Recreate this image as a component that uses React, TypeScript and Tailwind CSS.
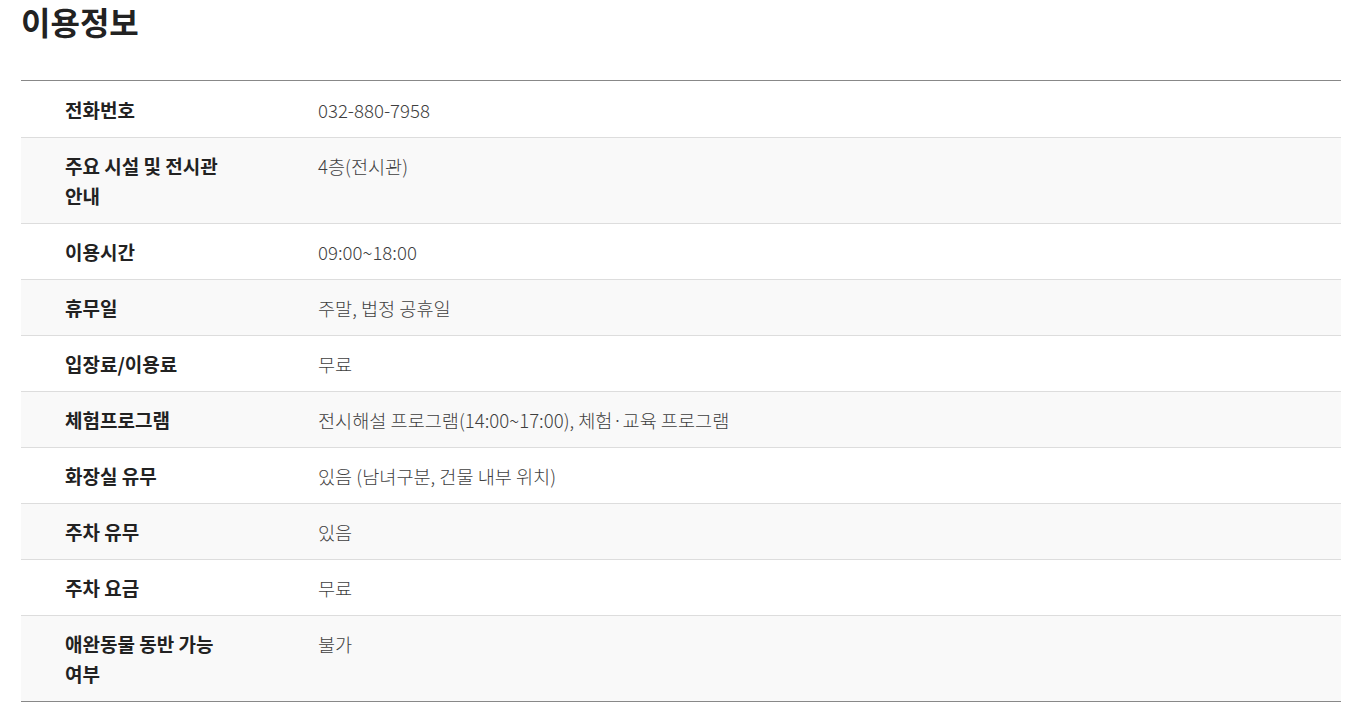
import React from "react";

const rows: { label: string; value: string }[] = [
  { label: "전화번호", value: "032-880-7958" },
  { label: "주요 시설 및 전시관 안내", value: "4층(전시관)" },
  { label: "이용시간", value: "09:00~18:00" },
  { label: "휴무일", value: "주말, 법정 공휴일" },
  { label: "입장료/이용료", value: "무료" },
  { label: "체험프로그램", value: "전시해설 프로그램(14:00~17:00), 체험·교육 프로그램" },
  { label: "화장실 유무", value: "있음 (남녀구분, 건물 내부 위치)" },
  { label: "주차 유무", value: "있음" },
  { label: "주차 요금", value: "무료" },
  { label: "애완동물 동반 가능 여부", value: "불가" },
];

export default function App() {
  return (
    <div
      className="bg-white px-[21px] pb-4 text-[#222]"
      style={{ fontFamily: '"Noto Sans CJK KR", "Noto Sans", sans-serif' }}
    >
      <h2 className="text-[32px] font-bold leading-[42px] text-[#222]">이용정보</h2>

      <div className="mt-[38px] border-t border-b border-[#888] w-[1320px]">
        {rows.map((r, i) => (
          <div
            key={r.label}
            className={`flex leading-[30px] ${
              i > 0 ? "border-t border-[#dddddd]" : "pt-px"
            } ${i % 2 === 1 ? "bg-[#f9f9f9]" : "bg-white"}`}
          >
            <div className="w-[297px] shrink-0 pl-[44px] pr-[70px] pt-[13px] pb-[12px] text-[19px] font-bold break-keep">
              {r.label}
            </div>
            <div className="flex-1 pt-[13px] pb-[12px] text-[18.6px] font-light text-[#3f3f3f] break-keep">
              {r.value}
            </div>
          </div>
        ))}
      </div>
    </div>
  );
}
